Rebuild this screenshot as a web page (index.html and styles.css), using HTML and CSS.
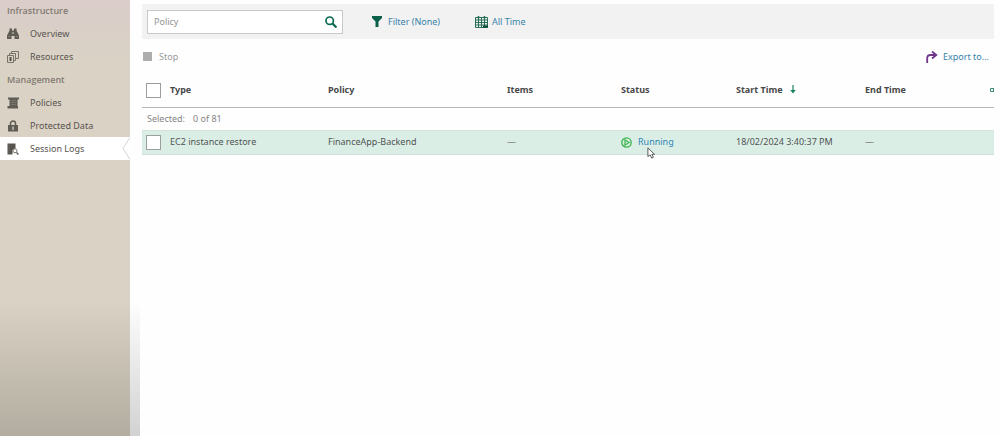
FILE: index.html
```html
<!DOCTYPE html>
<html lang="en">
<head>
<meta charset="utf-8">
<title>Session Logs</title>
<link rel="stylesheet" href="styles.css">
</head>
<body>
<div class="app">
  <nav class="sidebar" aria-label="Main">
    <h2 class="nav-title nav-title-first">Infrastructure</h2>
    <a class="nav-item" href="#overview">
      <svg class="nav-icon" viewBox="0 0 12 12"><path d="M2.500.5h2.500v2h2v-2h2.500v2l2.500 5V11H7.500V8h-3v3H0V7.500l2.500-5z" fill="#5f5b55"/><path d="M5.200 4h1.600v2H5.200z" fill="#aaa398"/><path d="M1 8.500h2.500M8.500 8.500H11" stroke="#8f897f" stroke-width=".7"/></svg>
      Overview</a>
    <a class="nav-item" href="#resources">
      <svg class="nav-icon" viewBox="0 0 12 12" fill="none" stroke="#77726a"><path d="M.5 4.500h6v7h-6zM2.500 4V2.500h6v7H7M4.500 2V.5h7v7H9"/><path d="M3.500 6v4" stroke="#55514b" stroke-width="2"/></svg>
      Resources</a>
    <h2 class="nav-title">Management</h2>
    <a class="nav-item" href="#policies">
      <svg class="nav-icon" viewBox="0 0 12 12"><path d="M1 .5h11v2h-1.500V9h.5v2.500H.5V9H2.500V2.500H1z" fill="#5f5b55"/><path d="M4 3.500h5M4 5.500h5M4 7.500h5" stroke="#8d877d" stroke-width=".6"/></svg>
      Policies</a>
    <a class="nav-item" href="#protected">
      <svg class="nav-icon" viewBox="0 0 12 12"><path d="M3.500 5.500V3.500a2.500 2.500 0 0 1 5 0v2" fill="none" stroke="#5f5b55" stroke-width="1.500"/><path d="M1 5h10v6.500H1z" fill="#5f5b55"/><path d="M6 6.500v3.500" stroke="#d8d1c4" stroke-width="1.300"/></svg>
      Protected Data</a>
    <a class="nav-item nav-item-active" href="#sessions" aria-current="page">
      <svg class="nav-icon" viewBox="0 0 12 12"><path d="M.5.500h8v5L5.500 7v4.500h-5z" fill="#56534f"/><path d="M2 1v10" stroke="#77736d" stroke-width=".6"/><circle cx="8" cy="7.800" r="2" fill="#fff" stroke="#77736d"/><path d="M9.500 9.500l2 2" stroke="#66625c" stroke-width="1.500"/></svg>
      Session Logs
      <svg class="nav-notch" viewBox="0 0 8 23" fill="none"><path d="M8 .5L1 11.500l7 11" stroke="#d5d3cf"/></svg>
    </a>
  </nav>
  <div class="gutter"></div>
  <main class="content">
    <form class="filters">
      <div class="search">
        <input class="search-input" type="text" placeholder="Policy" aria-label="Policy">
        <button class="icon-button" type="button" aria-label="Search"><svg class="search-icon" viewBox="0 0 12 12" fill="none" stroke="#0b6b50"><circle cx="4.700" cy="4.700" r="3.700" stroke-width="1.700"/><path d="M7.500 7.500l4 4" stroke-width="2.200"/></svg></button>
      </div>
      <button class="link-button filter-button" type="button"><svg class="filter-icon" viewBox="0 0 10 12"><path d="M0 0h10v2L6.500 5.500V11h-3V5.500L0 2z" fill="#0b6049"/></svg>Filter (None)</button>
      <button class="link-button" type="button"><svg class="calendar-icon" viewBox="0 0 13 12" fill="none" stroke="#276f57"><path d="M.5 1.500h12v10H.5zM.5 4h12M.5 6.500h12M.5 9h12M3.500 1.500v10M6.500 1.500v10M9.500 1.500v10"/><path d="M3.500 0v2.500M9.500 0v2.500" stroke-width="1.500"/><path d="M8 10.500h5" stroke="#0b4838" stroke-width="2"/></svg>All Time</button>
    </form>
    <div class="actions">
      <button class="link-button stop-button" type="button" disabled><span class="stop-square"></span>Stop</button>
      <button class="link-button export-button" type="button"><svg class="export-icon" viewBox="0 0 12 12" fill="none" stroke="#70378b" stroke-width="1.800"><path d="M1.200 12V7.500Q1.200 4 4.500 4H10"/><path d="M6 .5L10.300 4 6 7.500"/></svg>Export to...</button>
    </div>
    <table class="sessions">
      <colgroup><col class="col-check"><col class="col-type"><col class="col-policy"><col class="col-items"><col class="col-status"><col class="col-start"><col><col class="col-menu"></colgroup>
      <thead>
        <tr><th><input class="check" type="checkbox" aria-label="Select all"></th><th>Type</th><th>Policy</th><th>Items</th><th>Status</th><th>Start Time<svg class="sort-icon" viewBox="0 0 6 9"><path d="M3 0v7" stroke="#168061" stroke-width="1.200"/><path d="M.3 5h5.400L3 8.500z" fill="#168061"/></svg></th><th>End Time</th><th><svg class="menu-icon" viewBox="0 0 4 4"><path d="M4 .5H.5v3H4M3.500 0v4" fill="none" stroke="#3c8f77"/></svg></th></tr>
      </thead>
      <tbody>
        <tr class="selection"><td colspan="8"><span class="selection-label">Selected:</span>0 of 81</td></tr>
        <tr class="session"><td><input class="check" type="checkbox" aria-label="Select EC2 instance restore"></td><td>EC2 instance restore</td><td>FinanceApp-Backend</td><td>—</td><td><a class="status" href="#running"><svg class="status-icon" viewBox="0 0 11 11"><circle cx="5.500" cy="5.500" r="4.700" fill="none" stroke="#35b44a" stroke-width="1.300"/><path d="M4 2.800v5.400L8 5.500z" fill="none" stroke="#35b44a" stroke-width="1.200"/></svg>Running<svg class="cursor" viewBox="0 0 8 11"><path d="M.7.8v8l2-1.600 1.500 3 1.600-.8-1.500-2.700h2.500z" fill="#fff" stroke="#55595a" stroke-width=".9"/></svg></a></td><td>18/02/2024 3:40:37 PM</td><td>—</td><td></td></tr>
      </tbody>
    </table>
  </main>
</div>
</body>
</html>
```
FILE: styles.css
```css
* { box-sizing: border-box; }
body {
  margin: 0;
  background: #fefefe;
  color: #505453;
  font: 9px/14px "Noto Sans", "Open Sans", sans-serif;
}
svg { display: block; flex: none; }
.app { display: flex; min-height: 100vh; padding-right: 7px; }

.sidebar {
  flex: none;
  width: 130px;
  background: linear-gradient(to bottom, transparent calc(100% - 136px), #b2ada0), linear-gradient(to bottom, #dacdca, #dad2c5 60px);
}
.nav-title {
  height: 23px;
  margin: 0;
  padding-left: 7px;
  color: #817a72;
  font: 600 9px/23px "Open Sans", "Noto Sans", sans-serif;
}
.nav-title-first { height: 22px; line-height: 22px; }
.nav-item {
  position: relative;
  display: flex;
  align-items: center;
  gap: 11px;
  height: 23px;
  padding-left: 7px;
  color: #57534e;
  text-decoration: none;
}
.nav-item-active { background: #fff; }
.nav-icon { width: 12px; height: 12px; }
.nav-notch { position: absolute; top: 0; right: 0; width: 8px; height: 23px; }
.gutter {
  flex: none;
  width: 10px;
  margin-right: 2px;
  background: linear-gradient(to bottom, transparent calc(100% - 136px), #d2d2d2);
}

.content { flex: 1; min-width: 0; padding-top: 4px; }
.filters { display: flex; align-items: center; height: 35px; padding-left: 5px; background: #f2f2f2; }
.search {
  display: flex;
  align-items: center;
  width: 196px;
  height: 24px;
  padding: 0 5px 0 6px;
  border: 1px solid #c9c9c9;
  background: #fff;
}
.search-input { flex: 1; min-width: 0; padding: 0; border: 0; outline: 0; background: none; color: #505453; font: inherit; }
.search-input::placeholder { color: #929292; opacity: 1; }
button { padding: 0; border: 0; background: none; font: inherit; }
.search-icon { width: 12px; height: 12px; }
.link-button { display: flex; align-items: center; color: #3683aa; }
.filter-button { margin: 0 35px 0 29px; }
.filter-icon { width: 10px; height: 12px; margin-right: 6px; }
.calendar-icon { width: 13px; height: 12px; margin-right: 4px; }

.actions { display: flex; align-items: center; justify-content: space-between; height: 35px; padding: 0 5px 0 1px; }
.stop-button { gap: 7px; color: #9a9a9a; }
.stop-square { width: 9px; height: 9px; background: #adadad; }
.export-button { gap: 5px; }
.export-icon { width: 12px; height: 12px; }

.sessions { width: 100%; table-layout: fixed; border-collapse: collapse; }
.col-check { width: 28px; }
.col-type { width: 158px; }
.col-policy { width: 179px; }
.col-items { width: 114px; }
.col-status { width: 115px; }
.col-start { width: 129px; }
.col-menu { width: 4px; }
th, td { padding: 0; text-align: left; white-space: nowrap; }
th { height: 33px; border-bottom: 1px solid #b8b8b8; color: #484848; font-size: 9px; font-weight: 700; }
.selection td { height: 23px; padding-left: 5px; color: #858585; }
.selection-label { margin-right: 8px; }
.session td { height: 24px; border-top: 1px solid #d3e2dc; border-bottom: 1px solid #cfded8; background: #dbeee6; }
.check {
  display: block;
  width: 15px;
  height: 15px;
  margin: 0 0 0 4px;
  border: 1px solid #9a9f9d;
  background: #fff;
  appearance: none;
}
.sort-icon { display: inline-block; width: 6px; height: 9px; margin-left: 7px; vertical-align: -1px; }
.menu-icon { width: 4px; height: 4px; }
.status { position: relative; display: inline-flex; align-items: center; gap: 6px; color: #2e86b4; text-decoration: none; vertical-align: middle; }
.status-icon { width: 11px; height: 11px; }
.cursor { position: absolute; top: 12px; left: 26px; width: 9px; height: 12px; }
```
